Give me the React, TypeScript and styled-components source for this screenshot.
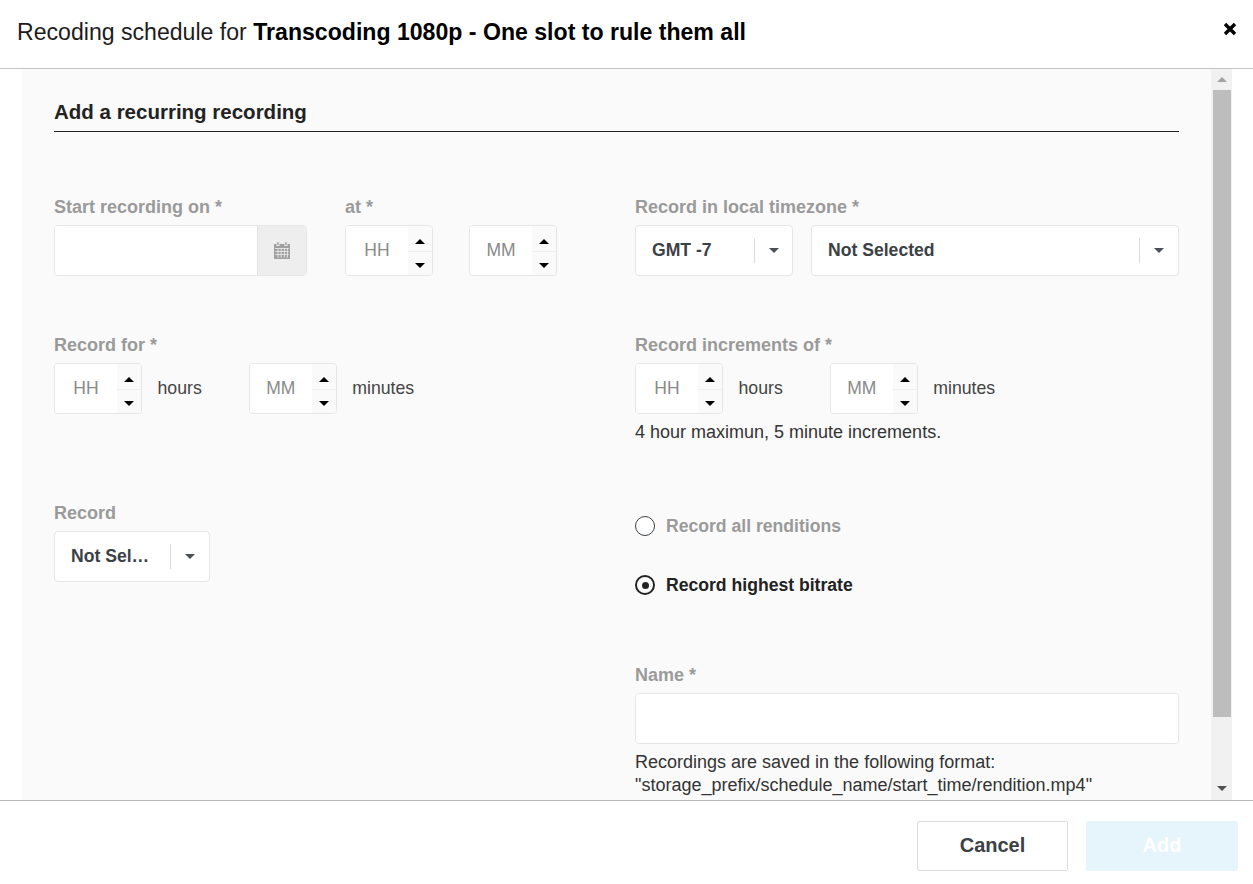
import styled, { createGlobalStyle } from "styled-components";

const GlobalStyle = createGlobalStyle`
  html, body {
    margin: 0;
    padding: 0;
    height: 100%;
    background: #ffffff;
    overflow: hidden;
  }
  * {
    box-sizing: border-box;
  }
  body {
    font-family: "Liberation Sans", Arial, sans-serif;
  }
`;

// Modal shell
const Modal = styled.div`
  display: flex;
  flex-direction: column;
  width: 1253px;
  height: 884px;
  background: #ffffff;
`;

const Header = styled.header`
  display: flex;
  align-items: center;
  justify-content: space-between;
  height: 69px;
  padding: 0 16px 4px 17px;
  border-bottom: 1px solid #c2c5c7;
`;

const Title = styled.h1`
  margin: 0;
  font-size: 23.1px;
  font-weight: 400;
  color: #1c1c1c;

  strong {
    font-weight: 700;
    color: #000000;
  }
`;

const CloseButton = styled.button`
  display: flex;
  padding: 0;
  margin-top: -6px;
  border: none;
  background: none;
`;

const Body = styled.div`
  display: flex;
  flex: 1;
  min-height: 0;
  padding-left: 22px;
  overflow: hidden;
`;

const Panel = styled.div`
  width: 1189px;
  padding: 30px 32px 0;
  background: #fafafa;
  overflow: hidden;
`;

const SectionTitle = styled.h2`
  margin: 0 0 65px;
  padding-bottom: 6px;
  font-size: 20.5px;
  line-height: 26px;
  font-weight: 700;
  color: #222222;
  border-bottom: 1px solid #222222;
`;

// Fake scrollbar
const ScrollTrack = styled.div`
  display: flex;
  flex-direction: column;
  align-items: center;
  width: 21px;
  background: #f1f1f1;
`;

const ScrollThumb = styled.div`
  width: 18px;
  height: 627px;
  background: #bdbdbd;
`;

const ScrollEnd = styled.div<{ $grow?: boolean }>`
  display: flex;
  align-items: center;
  justify-content: center;
  height: ${(p) => (p.$grow ? "83px" : "21px")};
  padding-top: ${(p) => (p.$grow ? "59px" : "0")};
  flex-shrink: 0;
`;

const ScrollArrow = styled.span<{ $down?: boolean }>`
  width: 0;
  height: 0;
  border-left: 5px solid transparent;
  border-right: 5px solid transparent;
  ${(p) =>
    p.$down
      ? "border-top: 5px solid #505050;"
      : "border-bottom: 5px solid #a3a3a3;"}
`;

// Form layout
const FormGrid = styled.div`
  display: grid;
  grid-template-columns: 581px 544px;
`;

const Column = styled.div`
  display: flex;
  flex-direction: column;
`;

const Field = styled.div<{ $height: number; $top?: number }>`
  height: ${(p) => p.$height}px;
  margin-top: ${(p) => p.$top ?? 0}px;
`;

const FieldRow = styled.div<{ $gap: number }>`
  display: flex;
  align-items: flex-start;
  gap: ${(p) => p.$gap}px;
`;

const Label = styled.label`
  display: block;
  margin-bottom: 8px;
  font-size: 18px;
  line-height: 20px;
  font-weight: 700;
  color: #9a9a9a;
  white-space: nowrap;
`;

const Help = styled.p`
  margin: 7px 0 0;
  font-size: 18px;
  line-height: 23px;
  color: #333333;
  white-space: nowrap;
`;

const Unit = styled.span<{ $gap: number }>`
  margin: 0 ${(p) => p.$gap}px 0 15.5px;
  font-size: 17.7px;
  line-height: 50px;
  color: #444444;
`;

// Inputs
const BoxFrame = styled.div`
  display: flex;
  height: 51px;
  background: #ffffff;
  border: 1px solid #e6e6e6;
  border-radius: 4px;
  overflow: hidden;
`;

const DateFrame = styled(BoxFrame)`
  width: 253px;
  margin-right: 38px;
`;

const TextInput = styled.input`
  flex: 1;
  min-width: 0;
  border: none;
  background: #ffffff;
  outline: none;
`;

const AddOn = styled.div`
  display: flex;
  align-items: center;
  justify-content: center;
  width: 49px;
  background: #eeeeee;
  border-left: 1px solid #e0e0e0;
`;

const NameFrame = styled(BoxFrame)`
  width: 544px;
`;

const SpinFrame = styled(BoxFrame)`
  width: 88px;
`;

const SpinInput = styled.input`
  width: 62px;
  border: none;
  outline: none;
  background: #ffffff;
  padding: 0 0 1px;
  text-align: center;
  font-family: inherit;
  font-size: 17.5px;

  &::placeholder {
    color: #8a8a8a;
    opacity: 1;
  }
`;

const Spinner = styled.div`
  display: flex;
  flex: 1;
  flex-direction: column;
  background: #fafafa;
`;

const SpinButton = styled.div<{ $top?: boolean }>`
  display: flex;
  flex: 1;
  align-items: center;
  justify-content: center;
  ${(p) =>
    p.$top
      ? "padding-top: 6px; border-bottom: 1px solid #efefef;"
      : "padding-top: 4px;"}
`;

const SpinArrow = styled.span<{ $down?: boolean }>`
  width: 0;
  height: 0;
  border-left: 5px solid transparent;
  border-right: 5px solid transparent;
  ${(p) => (p.$down ? "border-top: 5px solid #000;" : "border-bottom: 5px solid #000;")}
`;

// Select
const SelectFrame = styled(BoxFrame)<{ $width: number }>`
  width: ${(p) => p.$width}px;
  align-items: center;
  padding-left: 16px;
  font-size: 17.6px;
  font-weight: 700;
  color: #3c4146;

  > span:first-child {
    flex: 1;
    white-space: nowrap;
  }
`;

const SelectToggle = styled.div<{ $width: number }>`
  display: flex;
  align-items: center;
  justify-content: center;
  width: ${(p) => p.$width}px;
  height: 25px;
  border-left: 1px solid #dcdcdc;
`;

const Caret = styled.span`
  width: 0;
  height: 0;
  border-left: 5.5px solid transparent;
  border-right: 5.5px solid transparent;
  border-top: 5px solid #4a4f55;
`;

// Radios
const RadioRow = styled.div<{ $checked?: boolean }>`
  display: flex;
  align-items: center;
  gap: 11px;
  height: 46px;
  margin-bottom: 13px;
  font-size: 17.6px;
  line-height: 20px;
  font-weight: 700;
  color: ${(p) => (p.$checked ? "#222222" : "#9a9a9a")};
`;

const RadioCircle = styled.span<{ $checked?: boolean }>`
  display: flex;
  align-items: center;
  justify-content: center;
  width: 20px;
  height: 20px;
  border-radius: 50%;
  border: ${(p) => (p.$checked ? "2.5px solid #222222" : "1.5px solid #3a3f44")};
  background: #ffffff;

  &::after {
    content: "";
    display: ${(p) => (p.$checked ? "block" : "none")};
    width: 7px;
    height: 7px;
    border-radius: 50%;
    background: #222222;
  }
`;

// Footer
const Footer = styled.footer`
  display: flex;
  justify-content: flex-end;
  gap: 18px;
  height: 84px;
  padding: 20px 15px 0 0;
  border-top: 1px solid #b6b9bc;
`;

const FooterButton = styled.button<{ $primary?: boolean }>`
  width: ${(p) => (p.$primary ? "152px" : "151px")};
  height: 50px;
  padding: 0 0 2px;
  font-family: inherit;
  font-size: 20px;
  font-weight: 700;
  border-radius: 2px;
  color: ${(p) => (p.$primary ? "#ffffff" : "#3c4146")};
  background: ${(p) => (p.$primary ? "#e6f4fb" : "#ffffff")};
  border: 1px solid ${(p) => (p.$primary ? "#e6f4fb" : "#dddddd")};
`;

const CloseIcon = () => (
  <svg width="14" height="14" viewBox="0 0 14 14">
    <path d="M2 2 L12 12 M12 2 L2 12" stroke="#000" strokeWidth="3.4" />
  </svg>
);

const CalendarIcon = () => (
  <svg width="18" height="19" viewBox="0 0 18 19">
    <path d="M1 3h2.5v2h3V3h5v2h3V3H17v15H1z" fill="#a0a0a0" />
    <path d="M4.3 1h1.4v3H4.3zM12.3 1h1.4v3h-1.4z" fill="#a0a0a0" />
    <path
      d="M2.2 7.5h13.6M2.2 10.5h13.6M2.2 13.5h13.6M5 7v9.8M8.2 7v9.8M11.4 7v9.8M14.4 7v9.8"
      stroke="#e8e8e8"
      strokeWidth="0.9"
      fill="none"
    />
  </svg>
);

const NumberBox = ({ placeholder }: { placeholder: string }) => (
  <SpinFrame>
    <SpinInput placeholder={placeholder} readOnly />
    <Spinner>
      <SpinButton $top>
        <SpinArrow />
      </SpinButton>
      <SpinButton>
        <SpinArrow $down />
      </SpinButton>
    </Spinner>
  </SpinFrame>
);

const Select = ({
  value,
  width,
  toggle,
}: {
  value: string;
  width: number;
  toggle: number;
}) => (
  <SelectFrame $width={width}>
    <span>{value}</span>
    <SelectToggle $width={toggle}>
      <Caret />
    </SelectToggle>
  </SelectFrame>
);

export default function App() {
  return (
    <>
      <GlobalStyle />
      <Modal>
        <Header>
          <Title>
            Recoding schedule for <strong>Transcoding 1080p - One slot to rule them all</strong>
          </Title>
          <CloseButton>
            <CloseIcon />
          </CloseButton>
        </Header>

        <Body>
          <Panel>
            <SectionTitle>Add a recurring recording</SectionTitle>
            <FormGrid>
              <Column>
                <Field $height={138}>
                  <FieldRow $gap={0}>
                    <div>
                      <Label>Start recording on *</Label>
                      <DateFrame>
                        <TextInput readOnly />
                        <AddOn>
                          <CalendarIcon />
                        </AddOn>
                      </DateFrame>
                    </div>
                    <div>
                      <Label>at *</Label>
                      <FieldRow $gap={36}>
                        <NumberBox placeholder="HH" />
                        <NumberBox placeholder="MM" />
                      </FieldRow>
                    </div>
                  </FieldRow>
                </Field>
                <Field $height={168}>
                  <Label>Record for *</Label>
                  <FieldRow $gap={0}>
                    <NumberBox placeholder="HH" />
                    <Unit $gap={47}>hours</Unit>
                    <NumberBox placeholder="MM" />
                    <Unit $gap={0}>minutes</Unit>
                  </FieldRow>
                </Field>
                <Field $height={90}>
                  <Label>Record</Label>
                  <Select value="Not Sel…" width={156} toggle={39} />
                </Field>
              </Column>

              <Column>
                <Field $height={138}>
                  <Label>Record in local timezone *</Label>
                  <FieldRow $gap={18}>
                    <Select value="GMT -7" width={158} toggle={38} />
                    <Select value="Not Selected" width={368} toggle={39} />
                  </FieldRow>
                </Field>
                <Field $height={168}>
                  <Label>Record increments of *</Label>
                  <FieldRow $gap={0}>
                    <NumberBox placeholder="HH" />
                    <Unit $gap={47}>hours</Unit>
                    <NumberBox placeholder="MM" />
                    <Unit $gap={0}>minutes</Unit>
                  </FieldRow>
                  <Help>4 hour maximun, 5 minute increments.</Help>
                </Field>
                <RadioRow>
                  <RadioCircle />
                  Record all renditions
                </RadioRow>
                <RadioRow $checked>
                  <RadioCircle $checked />
                  Record highest bitrate
                </RadioRow>
                <Field $height={140} $top={44}>
                  <Label>Name *</Label>
                  <NameFrame>
                    <TextInput readOnly />
                  </NameFrame>
                  <Help>
                    Recordings are saved in the following format:
                    <br />
                    "storage_prefix/schedule_name/start_time/rendition.mp4"
                  </Help>
                </Field>
              </Column>
            </FormGrid>
          </Panel>
          <ScrollTrack>
            <ScrollEnd>
              <ScrollArrow />
            </ScrollEnd>
            <ScrollThumb />
            <ScrollEnd $grow>
              <ScrollArrow $down />
            </ScrollEnd>
          </ScrollTrack>
        </Body>

        <Footer>
          <FooterButton>Cancel</FooterButton>
          <FooterButton $primary>Add</FooterButton>
        </Footer>
      </Modal>
    </>
  );
}
